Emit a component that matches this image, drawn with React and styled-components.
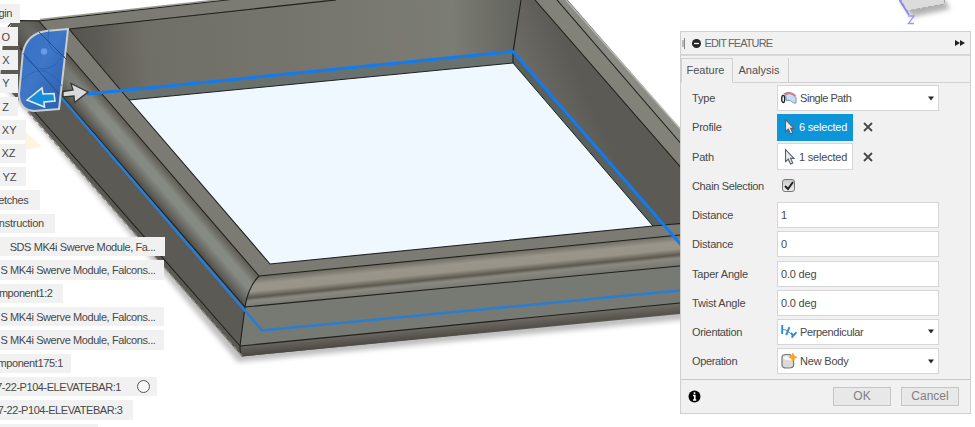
import React from "react";
import styled, { createGlobalStyle, css } from "styled-components";

const GlobalStyle = createGlobalStyle`
  *, *::before, *::after { box-sizing: border-box; }
  body { margin: 0; background: #fff; overflow: hidden; font-family: "Liberation Sans", Arial, sans-serif; }
`;

const Workspace = styled.main`
  display: grid;
  width: 975px;
  height: 427px;
  overflow: hidden;
  background: #fff;
  color: #484848;
  font-size: 11px;
  > * { grid-area: 1 / 1; }
`;

const Viewport = styled.svg`
  display: block;
  width: 975px;
  height: 427px;
`;

const Browser = styled.ul`
  display: flex;
  flex-direction: column;
  align-items: flex-start;
  gap: 4px;
  list-style: none;
  margin: 3.6px 0 0;
  padding: 0;
`;

const BrowserItem = styled.li`
  display: flex;
  align-items: center;
  justify-content: flex-end;
  flex: none;
  width: ${(p) => p.$width}px;
  height: 19.35px;
  padding-right: ${(p) => p.$pad}px;
  white-space: nowrap;
  background: #f1f1f1;
  letter-spacing: ${(p) => p.$track || 0}px;
`;

const Radio = styled.span`
  flex: none;
  width: 13px;
  height: 13px;
  margin-left: 15.5px;
  border: 1.3px solid #555;
  border-radius: 50%;
  background: #f8f8f8;
`;

const Panel = styled.section`
  display: flex;
  flex-direction: column;
  width: 291px;
  height: 383px;
  margin: 31px 0 0 680px;
  border: 1px solid #d0d0d0;
  background: #f1f1f1;
`;

const PanelHeader = styled.header`
  display: flex;
  align-items: center;
  height: 24px;
  padding: 0 5px 0 1px;
  border-bottom: 2px solid #d6d6d6;
  color: #666;
  font-size: 11px;
  letter-spacing: -0.9px;
`;

const Grip = styled.span`
  width: 3px;
  height: 11px;
  margin-right: 6.5px;
  border-right: 1px solid #888;
  background: linear-gradient(transparent 2px, #bbb 2px 9px, transparent 9px);
`;

const Title = styled.span`
  flex: 1;
  margin-left: 4px;
`;

const Tabs = styled.nav`
  display: flex;
  flex: none;
  height: 27px;
  padding-top: 2px;
`;

const Tab = styled.button`
  width: ${(p) => p.$width}px;
  padding: 0 3px 1px 0;
  border: 0 solid #d0d0d0;
  border-right-width: 1px;
  border-bottom-width: 1px;
  background: #f1f1f1;
  color: #505050;
  font: 11px "Liberation Sans", Arial, sans-serif;
  ${(p) => p.$active && css`
    padding-bottom: 2px;
    border-top-width: 1px;
    border-left-width: 1px;
    border-bottom-color: transparent;
  `}
`;

const TabFill = styled.span`
  flex: 1;
  border-bottom: 1px solid #d0d0d0;
`;

const Form = styled.div`
  display: grid;
  grid-auto-rows: 29.22px;
  align-items: center;
  height: 296px;
  padding: 0.6px 0 0 11px;
`;

const FormRow = styled.div`
  display: grid;
  grid-template-columns: 85px 162px;
  align-items: center;
`;

const Label = styled.span`
  letter-spacing: ${(p) => p.$track ?? -0.2}px;
  white-space: nowrap;
`;

const Field = styled.div`
  display: flex;
  align-items: center;
  height: 26px;
  padding: 0 4px 0 3px;
  border: 1px solid #d6d6d6;
  background: #fff;
  white-space: nowrap;
  letter-spacing: -0.2px;
`;

const FieldText = styled.span`
  flex: 1;
  letter-spacing: ${(p) => p.$track}px;
`;

const FieldIcon = styled.svg`
  flex: none;
  width: 16px;
  height: 16px;
  margin-right: 3px;
`;

const Selection = styled.div`
  display: flex;
  align-items: center;
  gap: 10px;
`;

const Picker = styled.button`
  display: flex;
  align-items: center;
  gap: 2px;
  width: 76px;
  height: 27px;
  padding: 0 0 0 5px;
  border: 1px solid ${(p) => (p.$active ? "#1195d8" : "#d6d6d6")};
  background: ${(p) => (p.$active ? "#0d95da" : "#fff")};
  color: ${(p) => (p.$active ? "#fff" : "#484848")};
  font: 11px "Liberation Sans", Arial, sans-serif;
  letter-spacing: -0.2px;
  white-space: nowrap;
`;

const CheckBox = styled.span`
  display: grid;
  place-items: center;
  width: 13px;
  height: 13px;
  margin-left: 5px;
  border: 1.5px solid #777;
  border-radius: 3px;
  background: linear-gradient(#ccc, #eee);
`;

const Footer = styled.footer`
  display: flex;
  align-items: center;
  flex: 1;
  gap: 10px;
  padding: 0 11px 1px 7px;
  border-top: 1px solid #c8c8c8;
`;

const Spacer = styled.span`
  flex: 1;
`;

const ActionButton = styled.button`
  width: 58px;
  height: 19px;
  padding: 0;
  border: 1px solid #c6c6c6;
  background: #e8e8e8;
  color: #808080;
  font: 12px "Liberation Sans", Arial, sans-serif;
`;

const browserItems = [
  { text: "gin", width: 20, pad: 8, track: -0.4 },
  { text: "O", width: 18, pad: 8 },
  { text: "X", width: 18, pad: 8.5 },
  { text: "Y", width: 17.5, pad: 8 },
  { text: "Z", width: 18, pad: 9 },
  { text: "XY", width: 26, pad: 9.5 },
  { text: "XZ", width: 26, pad: 10.5 },
  { text: "YZ", width: 26, pad: 9.5 },
  { text: "etches", width: 39.5, pad: 11, track: -0.35 },
  { text: "nstruction", width: 55, pad: 11, track: -0.25 },
  { text: "SDS MK4i Swerve Module, Fa...", width: 165, pad: 9.5, track: -0.41 },
  { text: "S MK4i Swerve Module, Falcons...", width: 164, pad: 8.5, track: -0.41 },
  { text: "mponent1:2", width: 63, pad: 10.5, track: -0.45 },
  { text: "S MK4i Swerve Module, Falcons...", width: 164, pad: 8.5, track: -0.41 },
  { text: "S MK4i Swerve Module, Falcons...", width: 164, pad: 8.5, track: -0.41 },
  { text: "mponent175:1", width: 71, pad: 8, track: -0.4 },
  { text: "7-22-P104-ELEVATEBAR:1", width: 157, pad: 7.5, track: -0.45, radio: true },
  { text: "7-22-P104-ELEVATEBAR:3", width: 133, pad: 10.5, track: -0.45 },
  { text: "", width: 98, pad: 0 },
];

function Scene() {
  return (
    <Viewport viewBox="0 0 975 427">
      <defs>
        <linearGradient id="backWall" gradientUnits="userSpaceOnUse" x1="70" y1="50" x2="520" y2="30">
          <stop offset="0" stopColor="#54524c" />
          <stop offset=".07" stopColor="#5e5c56" />
          <stop offset=".17" stopColor="#706f67" />
          <stop offset=".45" stopColor="#75746c" />
          <stop offset=".85" stopColor="#7b7c74" />
          <stop offset="1" stopColor="#64645e" />
        </linearGradient>
        <linearGradient id="rightWall" gradientUnits="userSpaceOnUse" x1="514" y1="50" x2="560" y2="30">
          <stop offset="0" stopColor="#6d6b65" />
          <stop offset="1" stopColor="#5c5a54" />
        </linearGradient>
        <linearGradient id="leftMold" gradientUnits="userSpaceOnUse" x1="145" y1="192" x2="174" y2="167">
          <stop offset="0" stopColor="#4c4a45" />
          <stop offset=".15" stopColor="#66655e" />
          <stop offset=".38" stopColor="#858a84" />
          <stop offset=".55" stopColor="#858a83" />
          <stop offset=".78" stopColor="#646158" />
          <stop offset="1" stopColor="#7c7a70" />
        </linearGradient>
        <linearGradient id="frontMold" gradientUnits="userSpaceOnUse" x1="460" y1="257" x2="463" y2="287">
          <stop offset="0" stopColor="#716d64" />
          <stop offset=".22" stopColor="#99958a" />
          <stop offset=".45" stopColor="#989488" />
          <stop offset=".65" stopColor="#5d594f" />
          <stop offset=".76" stopColor="#8a8982" />
          <stop offset="1" stopColor="#77776f" />
        </linearGradient>
        <linearGradient id="frontBase" gradientUnits="userSpaceOnUse" x1="460" y1="325" x2="461" y2="336">
          <stop offset="0" stopColor="#6c6962" />
          <stop offset="1" stopColor="#4c4944" />
        </linearGradient>
        <linearGradient id="moldTop" gradientUnits="userSpaceOnUse" x1="20" y1="20" x2="100" y2="115">
          <stop offset="0" stopColor="#4e4c47" stopOpacity=".65" />
          <stop offset="1" stopColor="#4e4c47" stopOpacity="0" />
        </linearGradient>
        <linearGradient id="blueProfile" x1="0" y1="0" x2="1" y2="1">
          <stop offset="0" stopColor="#356fc4" />
          <stop offset=".45" stopColor="#3f76c6" />
          <stop offset="1" stopColor="#255aa8" />
        </linearGradient>
        <filter id="shadow" x="-10%" y="-10%" width="120%" height="120%">
          <feGaussianBlur stdDeviation="2.6" />
        </filter>
        <filter id="soft" x="-50%" y="-50%" width="200%" height="200%">
          <feGaussianBlur stdDeviation="2.5" />
        </filter>
      </defs>

      <path d="M26 132L42 147L24 150Z" fill="#fff4df" />
      <path d="M0 84L20 104L238 362L690 319V290L240 330L40 90Z" fill="#777" opacity=".48" filter="url(#shadow)" />

      <path d="M20 20.5L39 20L235 -2H566L690 140V313L242 356.5L28 111L0 80L3 40L10 27Z" fill="#5c5a54" />
      <path d="M10 27Q12 21 20 20.5L39 21L259 276Q249 286 245 307L20 48Z" fill="url(#leftMold)" />
      <path d="M10 27Q12 21 20 20.5L39 21L160 161L132 177L20 48Z" fill="url(#moldTop)" />
      <path d="M39 20L235 -2H345L69 29L39 22Z" fill="#7b7b73" />
      <path d="M270 264L653 226L690 223V234L259 276Z" fill="#7b7b73" />
      <path d="M69 29L336 0H521L513 52V63L129 100Z" fill="url(#backWall)" />
      <path d="M120 90.5L513 52V63L129 100Z" fill="#69716e" />
      <path d="M69 29L129 100L270 264L259 276L39 21Z" fill="#7b7b73" />
      <path d="M521 0H535L690 177V224L653 226L513 63Z" fill="url(#rightWall)" />
      <path d="M513 52L665 226H653L513 63Z" fill="#59615f" />
      <path d="M535 0H557L690 154V177Z" fill="#828279" />
      <path d="M557 0H566L690 140V154Z" fill="#8a8c84" />
      <path d="M129 100L513 63L653 226L270 264Z" fill="#eff8ff" />
      <path d="M259 276L690 234V265L245 307Q248 286 259 276Z" fill="url(#frontMold)" />
      <path d="M245 307L690 265V302L240 346Z" fill="#777973" />
      <path d="M240 346L690 302V312L242 356.5Q240 356 240 346Z" fill="url(#frontBase)" />

      <g fill="none" stroke="#20211f" strokeWidth="1.1" strokeLinejoin="round">
        <path d="M8 27Q12 20.5 20 20.5L39 21L235 -1M39 21L259 276L690 234M69 29L336 0M69 29L129 100L270 264L653 226L690 222.5" />
        <path d="M129 100L513 63L653 226" strokeWidth="1" />
        <path d="M521 0L513 52V63M535 0L690 178M557 0L690 154" />
        <path d="M20 48L245 307L690 265M259 276Q248 287 245 307L240 346Q240 355 242 356M33 110L240 346L690 302" />
      </g>
      <path d="M28 112L242 356" stroke="#8d8b7d" strokeWidth="1.4" strokeDasharray="5 3" />
      <path d="M566 0L690 140" stroke="#b5b7b0" strokeWidth="1.5" />
      <path d="M40 19.5L230 -1.5" stroke="#9a9b93" strokeWidth="1.4" />

      <path d="M87 94L513 51.5L690 255" fill="none" stroke="#117bf2" strokeWidth="3" />
      <path d="M60 96L262 330.5L690 289.5" fill="none" stroke="#287dd4" strokeWidth="2.5" />

      <path d="M68 29L46 31Q27 34 23 52L19 94Q19 110 34 111L59 109Z" fill="url(#blueProfile)" stroke="#c9ced3" strokeWidth="2" />
      <g fill="none" stroke="#2860b4">
        <path d="M49 30Q44 50 65 57M23 53Q33 70 45 69Q57 67 64 53M22 80Q33 69 45 71Q56 76 62 86" strokeWidth=".8" />
        <path d="M39 32L67 60M24 54L59 94" strokeWidth="1" stroke="#244f91" />
      </g>
      <circle cx="44" cy="51.5" r="3.2" fill="#669bea" />
      <path d="M27 100L42 88L43 94L54 93.5L55 101L44 102L44.5 107Z" fill="#168fda" stroke="#e5edf2" strokeWidth="1.5" />
      <path d="M63 91.5L73 90L71 83.5L88 92L74.5 102.5L74 96L63 97Z" fill="#d9dbda" stroke="#363633" strokeWidth="1.3" />

      <path d="M900 0L912 17L950 9L945 0Z" fill="#999" opacity=".75" filter="url(#soft)" />
      <path d="M900 -2L907 11L944.5 4V-2Z" fill="#dcdcdc" stroke="#a4a4a4" strokeDasharray="4 2" />
      <path d="M899.5 0L909 15" stroke="#8c87f3" strokeWidth="1.8" />
      <path d="M908 16H914L908.5 23.5H914" fill="none" stroke="#9b97fa" strokeWidth="1.3" />
    </Viewport>
  );
}

function Pointer() {
  return (
    <svg width="14" height="18" viewBox="0 0 14 18">
      <path d="M2.5 1.5V13.5L5.3 11.2L7.6 16L9.8 15L7.6 10.4H11Z" fill="#e8eaed" stroke="#59616b" strokeWidth="1.1" />
    </svg>
  );
}

function Caret() {
  return <svg width="6" height="5" viewBox="0 0 6 5"><path d="M0 .5H6L3 4.5Z" fill="#282828" /></svg>;
}

const icons = {
  path: (
    <FieldIcon viewBox="0 0 16 16">
      <path d="M4.5 5Q10 1 15 7.5V13H12.5Q9.5 9 5.5 10.5Z" fill="#c4dcf6" stroke="#6e88b4" strokeWidth=".9" />
      <path d="M3 4.2Q9 .6 14.5 6" fill="none" stroke="#d97a74" strokeWidth="1.8" />
      <ellipse cx="2.2" cy="9" rx="1.5" ry="3.6" fill="#fff" stroke="#252525" strokeWidth="1.4" />
    </FieldIcon>
  ),
  orientation: (
    <FieldIcon viewBox="0 0 16 16">
      <path d="M1.2 1V10M8.4 3.2L5.2 11.2M10 8.8L11.8 11.8M15.4 8.2L10.6 13.6" fill="none" stroke="#2490e4" strokeWidth="1.9" />
      <path d="M1.2 5.5Q4.5 5.2 7 7.6T13 10.6" fill="none" stroke="#71787e" strokeWidth=".9" />
    </FieldIcon>
  ),
  body: (
    <FieldIcon viewBox="0 0 16 16">
      <path d="M1 4.5Q1 1.5 5 1.5H9L12.6 6V12Q12.6 15 8 15H5.5Q1 15 1 12Z" fill="#dadada" stroke="#777" strokeWidth="1.2" />
      <path d="M2 4.5Q6 1.6 10 5L11 7Q6 8 2 5.5Z" fill="#f8f8f8" />
      <path d="M11.8 0L13.2 2.8L16 4.2L13.2 5.6L11.8 8.6L10.4 5.6L7.6 4.2L10.4 2.8Z" fill="#faa71b" stroke="#faa71b" strokeWidth=".6" />
    </FieldIcon>
  ),
};

function Choice({ icon, track = -0.2, children }) {
  return <Field>{icons[icon]}<FieldText $track={track}>{children}</FieldText><Caret /></Field>;
}

function Select({ active, children }) {
  return (
    <Selection>
      <Picker $active={active}><Pointer />{children}</Picker>
      <svg width="10" height="10" viewBox="0 0 10 10"><path d="M1 1L9 9M9 1L1 9" stroke="#484848" strokeWidth="1.8" /></svg>
    </Selection>
  );
}

function EditFeature() {
  return (
    <Panel>
      <PanelHeader>
        <Grip />
        <svg width="9" height="9" viewBox="0 0 9 9"><circle cx="4.5" cy="4.5" r="4.5" fill="#252525" /><path d="M2 4.5H7" stroke="#fff" strokeWidth="1.3" /></svg>
        <Title>EDIT FEATURE</Title>
        <svg width="10" height="6" viewBox="0 0 10 6"><path d="M0 0L5 3V0L10 3L5 6V3L0 6Z" fill="#222" /></svg>
      </PanelHeader>
      <Tabs><Tab $active $width={52}>Feature</Tab><Tab $width={56}>Analysis</Tab><TabFill /></Tabs>
      <Form>
        <FormRow><Label>Type</Label><Choice icon="path" track={-0.45}>Single Path</Choice></FormRow>
        <FormRow><Label>Profile</Label><Select active>6 selected</Select></FormRow>
        <FormRow><Label>Path</Label><Select>1 selected</Select></FormRow>
        <FormRow><Label $track={-0.35}>Chain Selection</Label><CheckBox><svg width="10" height="10" viewBox="0 0 10 10"><path d="M1 5L4 8L9 1" fill="none" stroke="#202020" strokeWidth="2" /></svg></CheckBox></FormRow>
        <FormRow><Label>Distance</Label><Field>1</Field></FormRow>
        <FormRow><Label>Distance</Label><Field>0</Field></FormRow>
        <FormRow><Label>Taper Angle</Label><Field>0.0 deg</Field></FormRow>
        <FormRow><Label>Twist Angle</Label><Field>0.0 deg</Field></FormRow>
        <FormRow><Label $track={-0.35}>Orientation</Label><Choice icon="orientation" track={-0.35}>Perpendicular</Choice></FormRow>
        <FormRow><Label $track={-0.35}>Operation</Label><Choice icon="body">New Body</Choice></FormRow>
      </Form>
      <Footer>
        <svg width="13" height="13" viewBox="0 0 13 13"><circle cx="6.5" cy="6.5" r="6" fill="#050505" /><path d="M6.5 2.2V4M5 5.5H6.8V10M5 10H8.3" fill="none" stroke="#fff" strokeWidth="1.6" /></svg>
        <Spacer />
        <ActionButton>OK</ActionButton>
        <ActionButton>Cancel</ActionButton>
      </Footer>
    </Panel>
  );
}

export default function App() {
  return (
    <>
      <GlobalStyle />
      <Workspace>
        <Scene />
        <Browser>
          {browserItems.map((item, index) => (
            <BrowserItem key={index} $width={item.width} $pad={item.pad} $track={item.track}>
              {item.text}{item.radio && <Radio />}
            </BrowserItem>
          ))}
        </Browser>
        <EditFeature />
      </Workspace>
    </>
  );
}
